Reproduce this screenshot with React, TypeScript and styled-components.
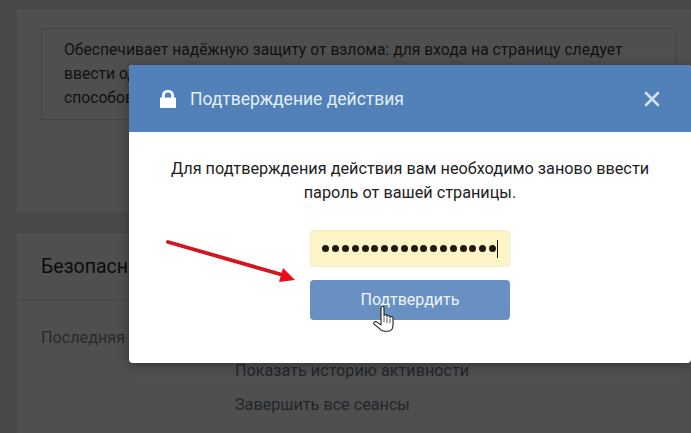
import React from "react";
import styled, { createGlobalStyle } from "styled-components";

const Global = createGlobalStyle`
  html, body { margin: 0; padding: 0; background: #4c4b4c; }
  body { font-family: Roboto, "Liberation Sans", sans-serif; overflow: hidden; }
  #root { width: 691px; height: 433px; overflow: hidden; }
`;

const Page = styled.div`
  position: relative;
  width: 691px;
  height: 433px;
  overflow: hidden;
  background: #4a4949;
  padding-left: 17px;
  box-sizing: border-box;
`;

const Column = styled.div`
  display: flex;
  flex-direction: column;
  gap: 20px;
`;

const Card = styled.section`
  background: #504f50;
  border-top: 1px solid #474646;
`;

const TopCard = styled(Card)`
  margin-top: 8px;
  height: 204px;
  padding: 19px 15px 0 24px;
  box-sizing: border-box;
`;

const BottomCard = styled(Card)`
  height: 210px;
`;

const Notice = styled.div`
  width: 635px;
  height: 92px;
  box-sizing: border-box;
  border: 1px solid #444343;
  padding: 9px 22px;
  font-size: 15.7px;
  line-height: 24px;
  white-space: nowrap;
  color: #111;
`;

const CardHeader = styled.h2`
  margin: 0;
  height: 67px;
  padding-left: 24px;
  display: flex;
  align-items: center;
  font-size: 19.5px;
  font-weight: 400;
  color: #0c0c0c;
  border-bottom: 1px solid #484747;
`;

const CardBody = styled.div`
  display: grid;
  grid-template-columns: 194px 1fr;
  padding: 26px 0 0 24px;
  font-size: 16.2px;
  line-height: 22px;
`;

const Label = styled.div`
  color: #2a2a2a;
  white-space: nowrap;
`;

const Links = styled.div`
  display: flex;
  flex-direction: column;
  gap: 12px;
  padding-top: 33px;
`;

const LinkText = styled.a`
  color: #22262c;
`;

const Modal = styled.div`
  position: absolute;
  left: 129px;
  top: 65px;
  width: 562px;
  height: 298px;
  border-radius: 4px;
  background: #fff;
  box-shadow: 0 2px 12px rgba(0, 0, 0, 0.35);
  overflow: hidden;
`;

const ModalHeader = styled.header`
  height: 67px;
  background: #5181b8;
  display: flex;
  align-items: center;
  padding: 0 31px;
  gap: 14px;
  color: #e3eff9;
`;

const ModalTitle = styled.h1`
  margin: 0;
  flex: 1;
  font-size: 17.5px;
  font-weight: 400;
  color: #e3eff9;
`;

const CloseButton = styled.button`
  border: 0;
  padding: 0;
  background: none;
  display: flex;
`;

const ModalBody = styled.div`
  display: flex;
  flex-direction: column;
  align-items: center;
  padding-top: 25px;
`;

const Message = styled.p`
  margin: 0;
  width: 520px;
  text-align: center;
  font-size: 16.25px;
  line-height: 24px;
  color: #222;
`;

const PasswordField = styled.div`
  margin-top: 25px;
  width: 200px;
  height: 37px;
  box-sizing: border-box;
  border: 1px solid #f3ecc4;
  border-radius: 3px;
  background: #fdf5c7;
  padding: 0 11px 0 11px;
  display: flex;
  align-items: center;
  justify-content: flex-end;
`;

const Dots = styled.span`
  display: flex;
  gap: 2.8px;
`;

const Dot = styled.i`
  display: block;
  width: 7px;
  height: 7px;
  border-radius: 50%;
  background: #241a0c;
`;

const Caret = styled.span`
  width: 1px;
  height: 18px;
  margin-left: 1px;
  background: #111;
`;

const SubmitButton = styled.button`
  margin-top: 13px;
  width: 200px;
  height: 40px;
  border: 0;
  border-radius: 4px;
  background: #6890c2;
  color: #eef4fa;
  font-family: inherit;
  font-size: 16px;
  padding: 0 0 2px;
`;

const Arrow = styled.svg`
  position: absolute;
  left: 30px;
  top: 168px;
`;

const Hand = styled.svg`
  position: absolute;
  left: 244px;
  top: 240px;
`;

export default function App() {
  return (
    <Page>
      <Global />
      <Column>
        <TopCard>
          <Notice>
            Обеспечивает надёжную защиту от взлома: для входа на страницу следует
            <br />
            ввести одноразовый код, полученный одним из доступных
            <br />
            способов.
          </Notice>
        </TopCard>
        <BottomCard>
          <CardHeader>Безопасность</CardHeader>
          <CardBody>
            <Label>Последняя активность</Label>
            <Links>
              <LinkText>Показать историю активности</LinkText>
              <LinkText>Завершить все сеансы</LinkText>
            </Links>
          </CardBody>
        </BottomCard>
      </Column>

      <Modal>
        <ModalHeader>
          <svg width="16" height="18" viewBox="0 0 16 18" aria-hidden="true">
            <path d="M0 8.6c0-.6.4-1 1-1h1V5.4C2 2.2 4.600 0 8 0s6 2.200 6 5.400v2.200h1c.6 0 1 .4 1 1V17c0 .6-.4 1-1 1H1c-.6 0-1-.4-1-1zM4.700 7.600h6.600V5.500C11.300 3.700 9.900 2.500 8 2.500S4.700 3.700 4.700 5.500z" fill="#fff" fillRule="evenodd" />
          </svg>
          <ModalTitle>Подтверждение действия</ModalTitle>
          <CloseButton aria-label="Закрыть">
            <svg width="16" height="16" viewBox="0 0 16 16" aria-hidden="true">
              <path d="M2 2l12 12M14 2L2 14" stroke="#cfe1f3" strokeWidth="2.6" strokeLinecap="round" />
            </svg>
          </CloseButton>
        </ModalHeader>
        <ModalBody>
          <Message>
            Для подтверждения действия вам необходимо заново ввести
            <br />
            пароль от вашей страницы.
          </Message>
          <PasswordField>
            <Dots>
              {Array.from({ length: 18 }, (_, i) => (
                <Dot key={i} />
              ))}
            </Dots>
            <Caret />
          </PasswordField>
          <SubmitButton>Подтвердить</SubmitButton>
        </ModalBody>
        <Arrow width="145" height="55" viewBox="0 0 145 55" aria-hidden="true">
          <path d="M9 9L124 42" stroke="#d3151f" strokeWidth="3.800" strokeLinecap="round" />
          <path d="M136 47L120 49L124 35Z" fill="#ee0d16" />
        </Arrow>
        <Hand width="22" height="29" viewBox="0 0 22 32" preserveAspectRatio="none" aria-hidden="true">
          <path
            d="M8 3c0-2 3-2 3 0v9c0-2 3-2 3 0v1c0-2 3-2 3 0v1c0-1.600 3-1.600 3 0v8c0 4-1.500 7-6 7h-2c-3 0-4.500-1-6-3.500L1 21c-1-2 1-3.500 3-2l4 3z"
            fill="#fff"
            stroke="#222"
            strokeWidth="1.100"
            strokeLinejoin="round"
          />
          <path d="M11 13v6M14 14v6M17 15v5" stroke="#444" strokeWidth="0.9" />
        </Hand>
      </Modal>
    </Page>
  );
}
